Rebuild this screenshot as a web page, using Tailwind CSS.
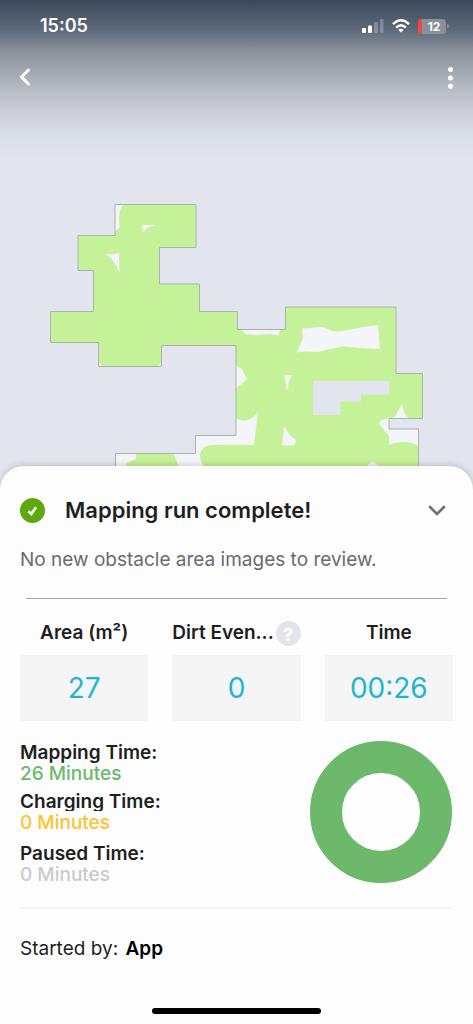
<!DOCTYPE html>
<html lang="en">
<head>
<meta charset="utf-8">
<meta name="viewport" content="width=device-width, initial-scale=1">
<title>Mapping run</title>
<script src="https://cdn.jsdelivr.net/npm/@tailwindcss/browser@4"></script>
</head>
<body class="min-h-screen bg-[#fdfdfd] font-['Inter',sans-serif] text-[#1f1f1f]">
<main class="flex min-h-screen flex-col">
  <section class="bg-[#e2e5ed] bg-[linear-gradient(#3a485a_0px,#5e6a7a_30px,#8a929c_52px,#b3b8c1_86px,#cbced5_112px,#dadee5_135px,#e2e5ed_162px)] text-white">
    <header>
      <div class="flex h-13 items-center justify-between pr-6 pl-10">
        <time class="text-lg font-semibold">15:05</time>
        <div class="flex items-center gap-2">
          <svg class="h-4 w-[22px]" viewBox="0 0 22 16" fill="#fff" aria-label="Signal">
            <rect x="0" y="10" width="4" height="5" rx="1"/><rect x="6" y="7.500" width="4" height="7.500" rx="1"/>
            <rect x="12" y="4" width="4" height="11" rx="1" opacity=".25"/><rect x="18" y="1" width="3.500" height="14" rx="1" opacity=".25"/>
          </svg>
          <svg class="h-4 w-[18px]" viewBox="0 0 18 16" fill="none" stroke="#fff" stroke-width="2.500" aria-label="Wi-Fi">
            <path d="M1 6.200Q9-1.600 17 6.200M4.200 9.600Q9 5 13.800 9.600"/><path d="M9 14.600 6.300 12Q9 9.600 11.700 12Z" fill="#fff" stroke="none"/>
          </svg>
          <div class="flex items-center gap-px">
            <div class="flex h-[15px] w-7 overflow-hidden rounded-sm bg-[#87919c]">
              <span class="w-1 bg-[#f8473c]"></span>
              <span class="flex-1 text-center text-xs leading-[15px] font-bold">12</span>
            </div>
            <span class="h-1 w-0.5 rounded-r bg-[#87919c]"></span>
          </div>
        </div>
      </div>
      <nav class="flex h-13 items-center justify-between px-3">
        <button class="grid size-6 place-items-center" aria-label="Back">
          <svg class="size-6" viewBox="0 0 24 24" fill="none" stroke="#fff" stroke-width="3" stroke-linecap="round" stroke-linejoin="round"><path d="M16.500 4 9.500 11 16.500 18"/></svg>
        </button>
        <button class="grid size-6 place-items-center" aria-label="More options">
          <svg class="size-6" viewBox="0 0 24 24" fill="#fff"><circle cx="13.500" cy="3.600" r="2.500"/><circle cx="13.500" cy="12" r="2.500"/><circle cx="13.500" cy="20.300" r="2.500"/></svg>
        </button>
      </nav>
    </header>
    <svg class="block w-full" viewBox="0 104 473 390" role="img" aria-label="Floor map">
      <path fill="#c5f198" d="M115 204.500H196V247.500H159.500V284H199.500V311.500H237.500V329.500H285.500V307H396V373.500H422.500V418.500H389V429H418.500V500H115.500V453.500H195.500V435.500H236V345.500H161.500V366.500H98.500V342.500H50.500V311.500H93.500V270.500H78V235.500H115Z"/>
      <g fill="#f3f5f8">
        <polygon points="115,204.500 123,204.500 120,210 119,217 119.500,228 115,231"/>
        <polygon points="142.500,225 155,225 148,227.500 143,232.500"/>
        <polygon points="105,254 113,254.500 119,252.500 119.500,272.500 116,265 111,258"/>
        <polygon points="98.500,362 102,366.500 98.500,366.500"/>
        <polygon points="161.500,362 161.500,366.500 158,366.500"/>
        <polygon points="241,329.500 280,329.500 278.500,335.500 272,334 256,335 246,334.500"/>
        <polygon points="302,328.500 322,327 334,331.500 343,331 360,327.500 378,325 380,349 359,348 343,346.500 328,349.500 318,352 304,351.500 296.500,352.500 303,338"/>
        <polygon points="236,365 242,369 247,379 242,384 236,388"/>
        <polygon points="284.500,375.500 291.500,375 288.500,383 288,390 286.500,389"/>
        <path d="M236,418C243,422 251,422 258,412L254,445H212C204,445 200,450 200,456C200,462 204,466 210,472H181L173.500,453.500H195.500V435.500H236Z"/>
        <path d="M115.500,453.500H136V459L127,463L125,472H115.500Z"/>
        <polygon points="284,426 290,435 296.500,441 294,445.500 282,445.500"/>
        <path d="M401.500,404L405,414L409,418.500H389V429H418V446C410,441 398,441 389,445V436L379,424L381,420L388,418.500L395,417Z"/>
        <polygon points="366,467 372,461 380,467"/>
      </g>
      <path fill="#e2e5ed" d="M313 381H389V394.500H361V401.500H340.500V415H313ZM389.500 419H419V428.500H389.500Z"/>
      <path fill="none" stroke="#a9b5aa" d="M115 204.500H196V247.500H159.500V284H199.500V311.500H237.500V329.500H285.500V307H396V373.500H422.500V418.500H389V429H418.500V500H115.500V453.500H195.500V435.500H236V345.500H161.500V366.500H98.500V342.500H50.500V311.500H93.500V270.500H78V235.500H115Z"/>
    </svg>
  </section>

  <section class="relative -mt-7 flex flex-1 flex-col rounded-t-3xl bg-[#fdfdfd] px-5 pt-7 pb-2.5 shadow-[0_-1px_6px_rgba(0,0,0,0.18)]">
    <div class="flex h-8 items-center">
      <svg class="size-[25px]" viewBox="0 0 25 25" aria-label="Complete"><circle cx="12.500" cy="12.500" r="12.500" fill="#5ea80d"/><path d="M8.500 13.300 11.300 16 16 9.200" fill="none" stroke="#fff" stroke-width="2.600"/></svg>
      <h1 class="ml-5 flex-1 text-[22px] font-semibold">Mapping run complete!</h1>
      <button class="grid size-8 place-items-center" aria-label="Collapse">
        <svg class="h-4 w-5" viewBox="0 0 20 16" fill="none" stroke="#6d7177" stroke-width="2.600" stroke-linecap="round" stroke-linejoin="round"><path d="M3 5 10 12 17 5"/></svg>
      </button>
    </div>
    <p class="mt-5 text-[19px] leading-7 text-[#6b6b6b]">No new obstacle area images to review.</p>
    <hr class="mx-1.5 mt-6 border-[#a2a5a6]">
    <dl class="mt-5 grid grid-cols-3 gap-6 text-center">
      <div>
        <dt class="flex h-7 items-center justify-center text-[19px] font-semibold">Area (m²)</dt>
        <dd class="mt-2 grid h-[66px] place-items-center bg-[#f5f5f5] text-[28px] text-[#21b5d5]">27</dd>
      </div>
      <div>
        <dt class="flex h-7 items-center justify-between text-[19px] font-semibold"><span>Dirt Even...</span>
          <button class="grid size-[25px] shrink-0 place-items-center rounded-full bg-[#e2e6ea] text-lg font-bold text-white" aria-label="About dirt events">?</button></dt>
        <dd class="mt-2 grid h-[66px] place-items-center bg-[#f5f5f5] text-[28px] text-[#21b5d5]">0</dd>
      </div>
      <div>
        <dt class="flex h-7 items-center justify-center text-[19px] font-semibold">Time</dt>
        <dd class="mt-2 grid h-[66px] place-items-center bg-[#f5f5f5] text-[28px] text-[#21b5d5]">00:26</dd>
      </div>
    </dl>
    <div class="mt-5 flex items-start justify-between">
      <dl class="pt-px text-[19px] leading-[21px] font-semibold">
        <dt>Mapping Time:</dt>
        <dd class="font-medium text-[#6cb96c]">26 Minutes</dd>
        <dt class="mt-[7px] h-5 overflow-hidden">Charging Time:</dt>
        <dd class="mt-px font-medium text-[#fdc42f]">0 Minutes</dd>
        <dt class="mt-2.5">Paused Time:</dt>
        <dd class="font-medium text-[#cbcbcb]">0 Minutes</dd>
      </dl>
      <svg class="mr-px size-[142px]" viewBox="0 0 142 142" role="img" aria-label="All 26 minutes spent mapping"><circle cx="71" cy="71" r="55" fill="none" stroke="#6cb96c" stroke-width="32"/></svg>
    </div>
    <hr class="mt-[22px] border-t-2 border-[#f4f4f4]">
    <p class="mt-6 text-[19px] leading-8">Started by: <strong class="ml-0.5 font-semibold text-black">App</strong></p>
    <div class="mx-auto mt-auto h-1.5 w-[169px] rounded-full bg-black"></div>
  </section>
</main>
</body>
</html>
